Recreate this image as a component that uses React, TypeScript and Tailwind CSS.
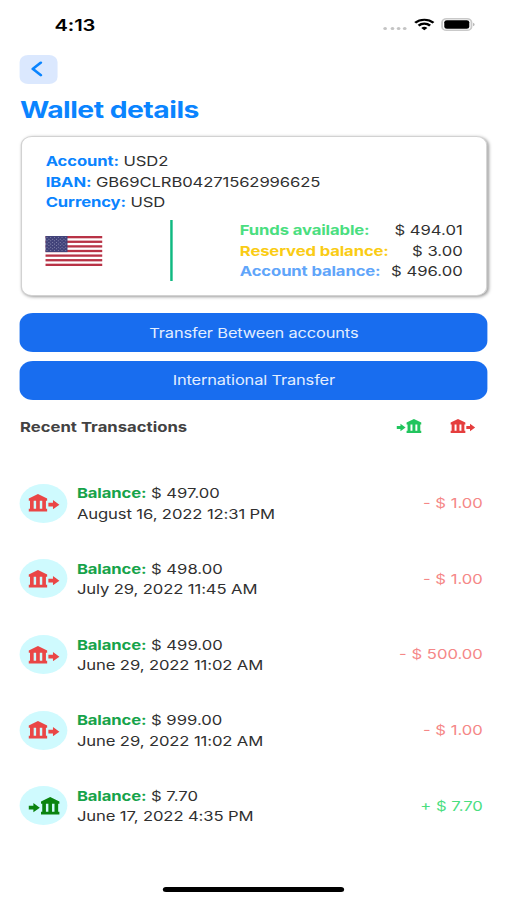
type IconProps = { className?: string }

const transactions = [
  { balance: "$ 497.00", date: "August 16, 2022 12:31 PM", amount: "- $ 1.00", incoming: false },
  { balance: "$ 498.00", date: "July 29, 2022 11:45 AM", amount: "- $ 1.00", incoming: false },
  { balance: "$ 499.00", date: "June 29, 2022 11:02 AM", amount: "- $ 500.00", incoming: false },
  { balance: "$ 999.00", date: "June 29, 2022 11:02 AM", amount: "- $ 1.00", incoming: false },
  { balance: "$ 7.70", date: "June 17, 2022 4:35 PM", amount: "+ $ 7.70", incoming: true },
]

const details = [
  { label: "Account:", value: "USD2" },
  { label: "IBAN:", value: "GB69CLRB04271562996625" },
  { label: "Currency:", value: "USD" },
]

const balances = [
  { label: "Funds available:", value: "$ 494.01", color: "text-[#4ade80]" },
  { label: "Reserved balance:", value: "$ 3.00", color: "text-[#facc15]" },
  { label: "Account balance:", value: "$ 496.00", color: "text-[#60a5fa]" },
]

function BankOut({ className }: IconProps) {
  return (
    <svg viewBox="0 0 24 24" fill="currentColor" className={className}>
      <path d="M14 7.5V9.4H2V7.5L8 4l6 3.5zM2.8 9.4h2.4v6.4H2.8zM6.8 9.4h2.4v6.4H6.8zM10.8 9.4h2.4v6.4h-2.4zM2 15.7h12V18H2zM14.8 11h3V8.8l4.2 3.7-4.2 3.7V14h-3z" />
    </svg>
  )
}

function BankIn({ className }: IconProps) {
  return (
    <svg viewBox="0 0 24 24" fill="currentColor" className={className}>
      <path d="M22 7.5V9.4H10V7.5L16 4l6 3.5zM10.8 9.4h2.4v6.4h-2.4zM14.8 9.4h2.4v6.4h-2.4zM18.8 9.4h2.4v6.4h-2.4zM10 15.7h12V18H10zM2 11h3V8.8l4.2 3.7L5 16.2V14H2z" />
    </svg>
  )
}

function Flag() {
  const stars = []
  for (let row = 0; row < 9; row++) {
    for (let col = 0; col < (row % 2 ? 5 : 6); col++) {
      stars.push(<circle key={`${row}-${col}`} cx={(row % 2 ? 3 : 1.4) + col * 3.1} cy={1.6 + row * 1.6} r="0.4" fill="#c9c9e0" />)
    }
  }
  return (
    <svg viewBox="0 0 47 30" preserveAspectRatio="none" className="h-[30px] w-[46.5px]">
      <rect width="47" height="30" fill="#fff" />
      {[0, 1, 2, 3, 4, 5, 6].map((i) => (
        <rect key={i} y={(i * 60) / 13} width="47" height={30 / 13} fill="#b83346" />
      ))}
      <rect width="18.3" height="16.1" fill="#42437a" />
      {stars}
    </svg>
  )
}

function StatusBar() {
  return (
    <div className="flex h-[54.5px] items-start justify-between pl-[44.5px] pr-[26px]">
      <span className="pt-[12.5px] text-[16.5px] leading-6 font-semibold text-black">4:13</span>
      <div className="flex items-center pt-[18px]">
        <div className="mt-[8px] flex gap-[2.2px]">
          {[0, 1, 2, 3].map((i) => (
            <span key={i} className="size-[3px] rounded-full bg-[#c4c4c4]" />
          ))}
        </div>
        <svg viewBox="0 0 17 12" className="ml-[6px] h-[13px] w-[17px]" fill="none" stroke="#000" strokeWidth="2.2">
          <path d="M1 4.3a10.8 10.8 0 0 1 15 0M3.8 7.1a6.8 6.8 0 0 1 9.4 0" />
          <path d="M8.5 11.8 6 9.4a3.6 3.6 0 0 1 5 0z" fill="#000" stroke="none" />
        </svg>
        <svg viewBox="0 0 28 13" className="ml-[5px] h-[13px] w-[28px]">
          <rect x="1" y="0.75" width="24" height="11.5" rx="3.6" fill="#fff" stroke="#c9c9c9" strokeWidth="1.5" />
          <rect x="2.8" y="2.3" width="20.4" height="8.4" rx="2" fill="#000" />
          <path d="M26.4 4.8c1.5.6 1.5 2.8 0 3.4z" fill="#a8a8a8" />
        </svg>
      </div>
    </div>
  )
}

export default function App() {
  return (
    <div className="h-[900px] w-[507px] overflow-hidden bg-white">
      {/* 414pt wide layout stretched to the full width */}
      <div className="flex h-[900px] w-[414px] origin-top-left scale-x-[1.2246] flex-col font-['Inter',sans-serif] text-[13.6px] leading-[20.5px] tracking-[-0.1px] text-[#303030]">
        <StatusBar />
        <main className="flex flex-col pr-[15.7px] pl-[16.3px]">
          <button className="flex h-[29px] w-[30.5px] items-center justify-center rounded-[7px] bg-[#dbe8fe] text-[#0a84ff]">
            <svg viewBox="0 0 10 16" className="mr-[3px] h-[16px] w-[10px]" fill="none" stroke="currentColor" strokeWidth="2.3" strokeLinecap="round" strokeLinejoin="round">
              <path d="M8.3 1.6 1.8 7.9l6.5 6.3" />
            </svg>
          </button>
          <h1 className="mt-[10.5px] text-[23.1px] leading-[32px] font-bold tracking-[-0.42px] text-[#0a84ff]">Wallet details</h1>

          <section className="mt-[9.5px] mr-[0.5px] ml-[1px] flex h-[160px] flex-col rounded-[9px] border border-[#d2d2d2] bg-white px-[19px] pt-[14.5px] shadow-[1px_1px_3px_rgba(0,0,0,0.4)]">
            {details.map((d) => (
              <p key={d.label}>
                <span className="font-bold text-[#0a84ff]">{d.label}</span> {d.value}
              </p>
            ))}
            <div className="mt-[7.5px] flex h-[61px]">
              <div className="flex w-[101.5px] items-center">
                <Flag />
              </div>
              <div className="w-[2px] bg-[#10b981]" />
              <div className="ml-[55px] flex-1">
                {balances.map((b) => (
                  <p key={b.label} className="flex justify-between whitespace-nowrap">
                    <span className={`font-bold ${b.color}`}>{b.label}</span>
                    <span className="tracking-normal">{b.value}</span>
                  </p>
                ))}
              </div>
            </div>
          </section>

          <div className="mt-[17.5px] flex flex-col gap-[8.5px] text-[13.4px] tracking-[-0.12px] text-[#e2edff]">
            <button className="h-[39px] rounded-[11px] bg-[#186def] pt-px">Transfer Between accounts</button>
            <button className="h-[39px] rounded-[11px] bg-[#186def] pt-px">International Transfer</button>
          </div>

          <div className="mt-[15.5px] flex h-6 items-center justify-between">
            <h2 className="font-bold tracking-[0.02px] text-[#424242]">Recent Transactions</h2>
            <div className="flex gap-5 pr-[8px]">
              <BankIn className="size-6 text-[#22c55e]" />
              <BankOut className="size-6 text-[#e53e3e]" />
            </div>
          </div>

          <ul className="mt-[26.4px]">
            {transactions.map((t, i) => (
              <li key={i} className="flex h-[75.7px] items-center">
                <span className="flex size-[39px] items-center justify-center rounded-full bg-[#cffafe]">
                  {t.incoming ? <BankIn className="mt-[2px] size-[30px] text-[#0a830f]" /> : <BankOut className="mt-[2px] size-[30px] text-[#ea4646]" />}
                </span>
                <div className="ml-[7.5px] flex-1 pt-px">
                  <p>
                    <span className="font-bold text-[#16a34a]">Balance:</span> <span className="tracking-normal">{t.balance}</span>
                  </p>
                  <p>{t.date}</p>
                </div>
                <span className={`mr-[4px] tracking-normal ${t.incoming ? "text-[#4ade80]" : "text-[#f58787]"}`}>{t.amount}</span>
              </li>
            ))}
          </ul>
        </main>
        <div className="mt-auto mb-[8px] h-[5px] w-[148px] self-center rounded-full bg-black" />
      </div>
    </div>
  )
}
